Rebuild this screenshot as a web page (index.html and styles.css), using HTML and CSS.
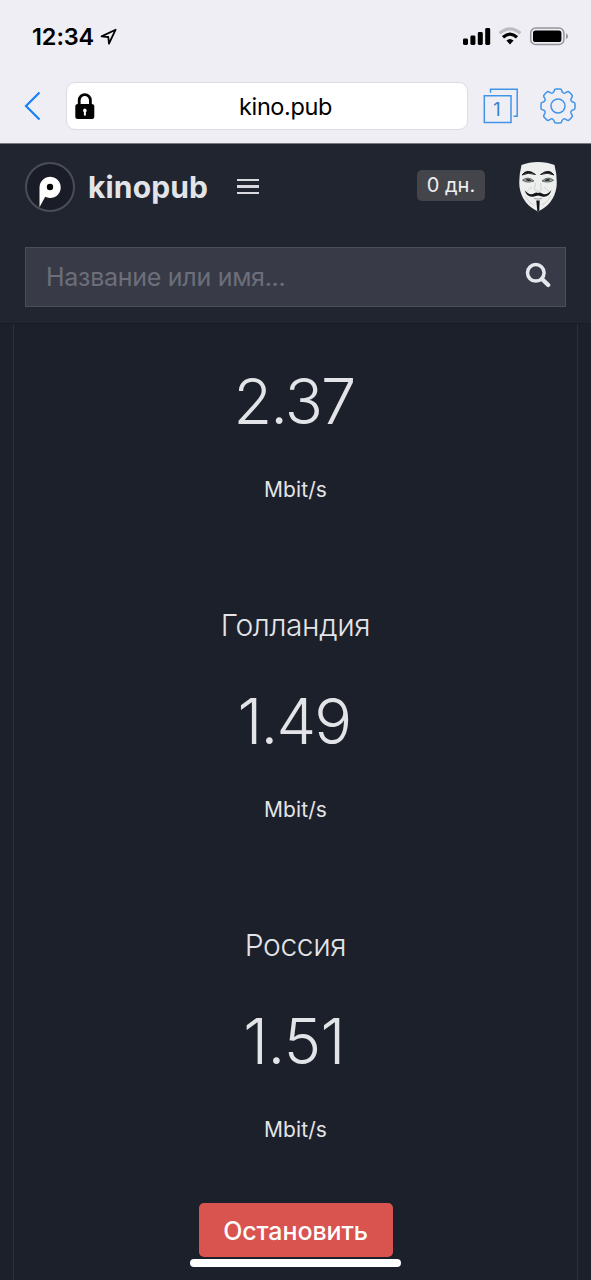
FILE: index.html
```html
<!DOCTYPE html>
<html lang="ru">
<head>
<meta charset="utf-8">
<title>kino.pub</title>
<link rel="stylesheet" href="styles.css">
</head>
<body>
<div class="screen">
  <div class="browser">
    <div class="status">
      <span class="time">12:34</span>
      <svg class="location" width="18" height="18" viewBox="0 0 18 18"><path d="M1.6 8.4 15.6 1.7 9 15.6 8.3 9Z" fill="none" stroke="#000" stroke-width="1.8" stroke-linejoin="round"/></svg>
      <svg class="signals" width="108" height="20" viewBox="0 0 108 20">
        <rect x="1" y="11.5" width="5" height="6.5" rx="1.4"/><rect x="8.4" y="8.5" width="5" height="9.5" rx="1.4"/><rect x="15.8" y="5" width="5" height="13" rx="1.4"/><rect x="23.2" y="1" width="5" height="17" rx="1.4"/>
        <path d="M37.6 6.2Q48 -2.4 58.4 6.2" fill="none" stroke="#bdbcc1" stroke-width="3.2"/>
        <path d="M41 10.2Q48 4 55 10.2" fill="none" stroke="#000" stroke-width="3.2"/>
        <path d="M44.4 13.6Q48 10.6 51.6 13.6L48 17.5Z"/>
        <rect x="68.7" y="1" width="33.2" height="16.5" rx="5" fill="none" stroke="#96959b" stroke-width="1.5"/>
        <rect x="71" y="3.5" width="28.4" height="11.5" rx="2.6"/>
        <path d="M104 6.2Q106 7 106 9.2T104 12.3Z" fill="#96959b"/>
      </svg>
    </div>
    <div class="toolbar">
      <svg class="back" width="18" height="30" viewBox="0 0 18 30"><path d="M15.5 1.5 2 15 15.5 28.5" fill="none" stroke="#1681f5" stroke-width="2.2"/></svg>
      <div class="address">
        <svg class="lock" width="20" height="27" viewBox="0 0 20 27"><path d="M4.2 13V7.4a5.6 5.8 0 0 1 11.2 0V13" fill="none" stroke="#000" stroke-width="2.8"/><rect x=".3" y="11" width="19" height="15" rx="2.5"/><path d="M9.8 15.5a2 2 0 0 1 1.1 3.6V22.5H8.9v-3.4a2 2 0 0 1 .9-3.6" fill="#fff"/></svg>
        <span class="host">kino.pub</span>
      </div>
      <svg class="tabs" width="36" height="36" viewBox="0 0 36 36"><path d="M7.5 4.8V1.3H34.2V28.3H30.5M1.3 7.8H28V34.5H1.3Z" fill="none" stroke="#4294e6" stroke-width="1.5"/><text class="tab-count" x="14" y="27.5" text-anchor="middle">1</text></svg>
      <svg class="gear" width="36" height="36" viewBox="-18 -18 36 36"><g fill="none" stroke="#4294e6" stroke-width="1.5" stroke-linejoin="round"><path d="M-5.1-13.3Q-3.8-14-3.7-15.6-3.5-17-2-17H2Q3.5-17 3.7-15.6 3.8-14 5.1-13.3 6.1-12.4 7.4-13.1L9-14.1Q10.4-14.8 11.4-13.7L13.7-11.4Q14.8-10.4 14.1-9L13.1-7.4Q12.4-6.1 13.3-5.1 14-3.8 15.6-3.7 17-3.5 17-2V2Q17 3.5 15.6 3.7 14 3.8 13.3 5.1 12.4 6.1 13.1 7.4L14.1 9Q14.8 10.4 13.7 11.4L11.4 13.7Q10.4 14.8 9 14.1L7.4 13.1Q6.1 12.4 5.1 13.3 3.8 14 3.7 15.6 3.5 17 2 17H-2Q-3.5 17-3.7 15.6-3.8 14-5.1 13.3-6.1 12.4-7.4 13.1L-9 14.1Q-10.4 14.8-11.4 13.7L-13.7 11.4Q-14.8 10.4-14.1 9L-13.1 7.4Q-12.4 6.1-13.3 5.1-14 3.8-15.6 3.7-17 3.5-17 2V-2Q-17-3.5-15.6-3.7-14-3.8-13.3-5.1-12.4-6.1-13.1-7.4L-14.1-9Q-14.8-10.4-13.7-11.4L-11.4-13.7Q-10.4-14.8-9-14.1L-7.4-13.1Q-6.1-12.4-5.1-13.3Z"/><circle r="7"/></g></svg>
    </div>
  </div>

  <header class="site">
    <div class="brandbar">
      <svg class="logo" width="50" height="50" viewBox="0 0 50 50"><circle cx="25" cy="25" r="24" fill="#1a1d27" stroke="#4a4d57" stroke-width="2"/><path d="M14.5 45.3V25.5A10.6 10.6 0 1 1 20.2 34.8Z" fill="#fff"/><circle cx="25" cy="25" r="3.2" fill="#050608"/></svg>
      <span class="brand">kinopub</span>
      <span class="burger"><i></i><i></i><i></i></span>
      <span class="days">0 дн.</span>
      <svg class="mask" width="38" height="50" viewBox="0 0 38 50">
        <path d="M2.5 3Q10 0 19 0T35.5 3Q38.5 15 37.5 25 35 42 19 49.5 3 42 .5 25-.5 15 2.5 3Z" fill="#edeeee"/>
        <path d="M3 13Q8 6 16.5 12.5 9 9.8 3 13M35 13Q30 6 21.5 12.5 29 9.8 35 13" fill="#16181b" stroke="#16181b" stroke-width=".9"/>
        <path d="M3.5 18.2Q9 13.6 15 19 8 21.5 3.5 18.2M34.5 18.2Q29 13.6 23 19 30 21.5 34.5 18.2" fill="#a3a5a4" stroke="#4a4e50" stroke-width=".8"/>
        <path d="M6.5 17.8Q9.5 15.8 12.5 18.5 9 20 6.5 17.8M31.5 17.8Q28.5 15.8 25.5 18.5 29 20 31.5 17.8" fill="#25292b"/>
        <path d="M16.5 21 15.5 28Q19 31 22.5 28L21.5 21M13 25Q9 27 7 31M25 25Q29 27 31 31M6 34Q10 41 15 43M32 34Q28 41 23 43" fill="none" stroke="#c8caca" stroke-width=".8"/>
        <path d="M5.5 28Q9 33 14 32 17 29.5 19 31 21 29.5 24 32 29 33 32.5 28 30 36 23 34.5L19 33.5 15 34.5Q8 36 5.5 28" fill="#141619"/>
        <path d="M15 36.5Q19 37.6 23 36.5" fill="none" stroke="#85898a" stroke-width=".8"/>
        <path d="M17.3 38.5H20.7L20.2 49H18.3Z" fill="#111316"/>
      </svg>
    </div>
    <div class="search">
      <span class="placeholder">Название или имя...</span>
      <svg width="26" height="26" viewBox="0 0 26 26"><circle cx="10.8" cy="10.8" r="8.3" fill="none" stroke="#e5e7ed" stroke-width="3.5"/><path d="M17 17 23.2 23" stroke="#e5e7ed" stroke-width="4.2" stroke-linecap="round"/></svg>
    </div>
  </header>

  <main class="page">
    <div class="panel">
      <section class="result"><div class="speed">2.37</div><div class="unit">Mbit/s</div></section>
      <section class="result"><h2 class="country">Голландия</h2><div class="speed">1.49</div><div class="unit">Mbit/s</div></section>
      <section class="result"><h2 class="country">Россия</h2><div class="speed speed-narrow">1.51</div><div class="unit">Mbit/s</div></section>
      <button class="stop">Остановить</button>
    </div>
  </main>
  <div class="home-indicator"></div>
</div>
</body>
</html>
```
FILE: styles.css
```css
* { box-sizing: border-box; }
body { margin: 0; font-family: Inter, sans-serif; background: #1c202a; color: #e3e4e8; }
svg { display: block; flex: none; }
.screen { position: relative; width: 591px; height: 1280px; overflow: hidden; display: flex; flex-direction: column; }

.browser { height: 144px; flex: none; background: #efeef4; color: #000; border-bottom: 1px solid #777981; }
.status { height: 74px; display: flex; align-items: center; padding: 0 21px 0 32px; }
.time { width: 68px; font-size: 23.5px; font-weight: 600; line-height: 30px; letter-spacing: -0.1px; }
.location { margin-top: -1px; }
.signals { margin-left: auto; }
.toolbar { display: flex; align-items: center; height: 64px; padding: 0 15px 0 24px; }
.back { margin-right: 24px; }
.address { display: flex; align-items: center; width: 402px; height: 48px; padding: 0 9px; background: #fff; border: 1px solid #dcdbe2; border-radius: 9px; }
.lock { margin-left: -1px; }
.host { flex: 1; padding: 2px 0 0 18px; text-align: center; font-size: 23.5px; line-height: 30px; letter-spacing: -0.4px; }
.tabs { margin-left: 15px; }
.gear { margin-left: auto; }
.tab-count { font-size: 18px; fill: #317fce; }

.site { height: 180px; flex: none; padding: 17px 25px 0; background: #212530; border-bottom: 1px solid #191b25; }
.brandbar { display: flex; align-items: center; height: 51px; padding-right: 9px; }
.brand { width: 149px; padding-left: 13px; font-size: 30px; font-weight: 700; line-height: 40px; letter-spacing: 0.15px; }
.burger { display: flex; flex-direction: column; gap: 4px; width: 22px; margin-left: 13px; }
.burger i { height: 2.4px; background: #d7d9de; }
.days { width: 68px; height: 31px; margin: -2px 34px 0 auto; border-radius: 5px; background: #44454b; color: #eeeef0; text-align: center; font-size: 20px; line-height: 30px; }
.search { display: flex; align-items: center; justify-content: space-between; height: 60px; margin: 35px 0 0; padding: 0 14px 4px 20px; background: #383b47; border: 1px solid #4b4e59; }
.placeholder { padding-top: 4px; font-size: 25px; line-height: 34px; letter-spacing: -0.28px; color: #6c6f7a; }

.page { flex: 1; padding: 0 13px; }
.panel { height: 100%; border: solid #2b2f3a; border-width: 0 1px; display: flex; flex-direction: column; align-items: center; text-align: center; }
.result { height: 320px; flex: none; display: flex; flex-direction: column; align-items: center; }
.result:first-child { height: 260px; padding-top: 32px; }
.country { margin: 20px 0 29px; font-size: 30px; font-weight: 300; line-height: 43px; letter-spacing: -0.4px; }
.speed { margin-right: 3px; font-size: 63px; font-weight: 300; line-height: 90px; letter-spacing: -1.8px; }
.speed-narrow { letter-spacing: -0.6px; }
.unit { margin-top: 29px; font-size: 21px; line-height: 30px; letter-spacing: 0.1px; }
.stop { width: 194px; height: 54px; flex: none; margin-top: -21px; padding: 0; border: 0; border-radius: 5px; background: #d9534f; color: #fff; font: 450 25px/56px Inter, sans-serif; letter-spacing: -0.1px; }
.home-indicator { position: absolute; left: 190px; top: 1259px; width: 211px; height: 8px; border-radius: 4px; background: #fff; }
```
